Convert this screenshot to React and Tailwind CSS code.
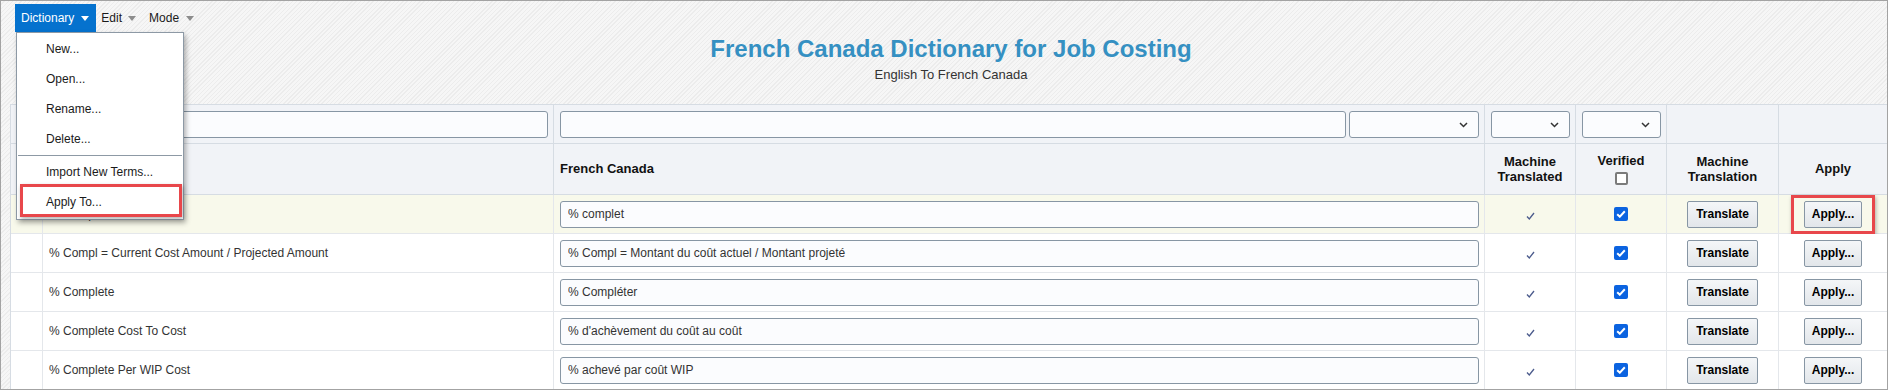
import { useState } from "react";

const terms = [
	{ en: "% Compl", fr: "% complet", active: true },
	{ en: "% Compl = Current Cost Amount / Projected Amount", fr: "% Compl = Montant du coût actuel / Montant projeté" },
	{ en: "% Complete", fr: "% Compléter" },
	{ en: "% Complete Cost To Cost", fr: "% d'achèvement du coût au coût" },
	{ en: "% Complete Per WIP Cost", fr: "% achevé par coût WIP" },
];

const menuItems = ["New...", "Open...", "Rename...", "Delete..."];

// little down arrow used by the menu bar
const Tri = ({ className }) => (
	<svg width="8" height="5" viewBox="0 0 8 5" className={className}>
		<polygon points="0,0 8,0 4,5" fill="currentColor" />
	</svg>
);

const Select = ({ className }) => (
	<div className={`relative h-[27px] rounded-[3px] border border-[#8796a4] bg-[#fbfcfe] ${className}`}>
		<svg width="9" height="6" viewBox="0 0 9 6" className="absolute right-[10px] top-[10px]">
			<path d="M1 1l3.5 3.5L8 1" fill="none" stroke="#333" strokeWidth="1.5" />
		</svg>
	</div>
);

const TextBox = ({ value, className }) => (
	<input
		readOnly
		value={value}
		className={`h-[27px] rounded-[3px] border border-[#8796a4] bg-[#fbfcfe] px-[7px] text-[12px] text-[#333] outline-none ${className}`}
	/>
);

const Checkbox = ({ checked }) =>
	checked ? (
		<div className="flex h-[14px] w-[14px] items-center justify-center rounded-[2px] bg-[#0b63e0]">
			<svg width="10" height="8" viewBox="0 0 10 8">
				<path d="M1.2 4.2l2.6 2.5L8.8 1.3" fill="none" stroke="#fff" strokeWidth="2" />
			</svg>
		</div>
	) : (
		<div className="h-[13px] w-[13px] rounded-[2px] border-2 border-[#7b7b7b] bg-white" />
	);

const Button = ({ children, className }) => (
	<div
		className={`flex h-[27px] items-center justify-center rounded-[2px] border border-[#8796a4] bg-[linear-gradient(#f4f6f8,#e2e6ea)] text-[12px] font-bold text-black ${className}`}
	>
		{children}
	</div>
);

const head = "border-r border-b border-[#d6dce3] bg-[#f1f3f7]";

const TermRow = ({ term }) => {
	const bg = term.active ? "bg-[#f8f9eb]" : "bg-white";
	const cell = `h-[39px] border-r border-b border-[#e4e7eb] flex items-center ${bg}`;
	return (
		<>
			<div className={`${cell} ${term.active ? "" : "bg-[#f1f3f7]"}`} />
			<div className={`${cell} pl-[6px] text-[12px] text-[#333]`}>{term.en}</div>
			<div className={`${cell} pl-[6px] pr-[5px]`}>
				<TextBox value={term.fr} className="w-full" />
			</div>
			<div className={`${cell} justify-center`}>
				<svg width="9" height="8" viewBox="0 0 9 8" className="mt-[3px]">
					<path d="M1 4.5l2.3 2.5L8 1" fill="none" stroke="#4b5b8c" strokeWidth="1.3" />
				</svg>
			</div>
			<div className={`${cell} justify-center`}>
				<Checkbox checked />
			</div>
			<div className={`${cell} justify-center`}>
				<Button className="w-[71px]">Translate</Button>
			</div>
			<div className={`${cell} relative justify-center`}>
				<Button className="w-[58px]">Apply...</Button>
				{term.active && (
					<div className="absolute left-[12px] right-[12px] top-0 bottom-[-1px] border-[3px] border-[#e8474b] shadow-[1px_2px_4px_rgba(0,0,0,0.3)]" />
				)}
			</div>
		</>
	);
};

export default function App() {
	const [rows] = useState(terms);

	return (
		<div className="relative h-[390px] w-[1888px] overflow-hidden border border-[#a3a3a3] bg-[repeating-linear-gradient(135deg,#f6f6f6_0px,#f6f6f6_2px,#ececec_2px,#ececec_3px)] font-['Liberation_Sans',Arial,sans-serif]">
			{/* menu bar */}
			<div className="ml-[14px] mt-[3px] flex h-[28px] items-center text-[12px]">
				<div className="flex h-full items-center gap-[7px] bg-[#0572ce] pl-[6px] pr-[7px] text-white">
					Dictionary <Tri className="text-white" />
				</div>
				<div className="flex h-full items-center gap-[6px] pl-[5px] pr-[8px] text-[#1a1a1a]">
					Edit <Tri className="text-[#8c8c8c]" />
				</div>
				<div className="flex h-full items-center gap-[7px] pl-[5px] pr-[8px] text-[#1a1a1a]">
					Mode <Tri className="text-[#8c8c8c]" />
				</div>
			</div>

			<div className="mt-[3px] pl-[14px] text-center">
				<h1 className="text-[24px] font-bold leading-[28px] text-[#3590c2]">French Canada Dictionary for Job Costing</h1>
				<p className="mt-[4px] text-[13px] leading-[16px] text-[#333]">English To French Canada</p>
			</div>

			{/* dictionary grid */}
			<div className="ml-[9px] mt-[21px] grid grid-cols-[32px_511px_931px_91px_91px_112px_109px] border-l border-t border-[#d6dce3]">
				{/* filter row */}
				<div className={`${head} h-[39px]`} />
				<div className={`${head} flex h-[39px] items-center pl-[6px] pr-[5px]`}>
					<TextBox value="" className="w-full" />
				</div>
				<div className={`${head} flex h-[39px] items-center gap-[3px] pl-[6px] pr-[5px]`}>
					<TextBox value="" className="flex-1" />
					<Select className="w-[130px]" />
				</div>
				<div className={`${head} flex h-[39px] items-center pl-[6px] pr-[5px]`}>
					<Select className="w-full" />
				</div>
				<div className={`${head} flex h-[39px] items-center pl-[6px] pr-[5px]`}>
					<Select className="w-full" />
				</div>
				<div className={`${head} h-[39px]`} />
				<div className={`${head} h-[39px]`} />

				{/* column headings */}
				<div className={`${head} h-[51px]`} />
				<div className={`${head} h-[51px]`} />
				<div className={`${head} flex h-[51px] items-center pl-[6px] text-[13px] font-bold text-[#111]`}>French Canada</div>
				<div className={`${head} flex h-[51px] items-center justify-center text-center text-[13px] font-bold leading-[15px] text-[#111]`}>
					Machine
					<br />
					Translated
				</div>
				<div className={`${head} flex h-[51px] flex-col items-center justify-center gap-[4px] text-[13px] font-bold leading-[15px] text-[#111]`}>
					Verified
					<Checkbox />
				</div>
				<div className={`${head} flex h-[51px] items-center justify-center text-center text-[13px] font-bold leading-[15px] text-[#111]`}>
					Machine
					<br />
					Translation
				</div>
				<div className={`${head} flex h-[51px] items-center justify-center text-[13px] font-bold text-[#111]`}>Apply</div>

				{rows.map((t) => (
					<TermRow key={t.fr} term={t} />
				))}
			</div>

			{/* open Dictionary menu */}
			<div className="absolute left-[15px] top-[31px] w-[168px] border border-[#8d99a5] bg-white pb-[2px] pt-[1px] text-[12px] text-[#1a1a1a] shadow-[2px_3px_5px_rgba(0,0,0,0.3)]">
				{menuItems.map((m) => (
					<div key={m} className="flex h-[30px] items-center pl-[29px]">
						{m}
					</div>
				))}
				<div className="mx-px my-px h-px bg-[#8d99a5]" />
				<div className="flex h-[30px] items-center pl-[29px]">Import New Terms...</div>
				<div className="relative flex h-[30px] items-center pl-[29px]">
					Apply To...
					<div className="absolute -top-[3px] bottom-0 left-[3px] right-px border-[3px] border-[#e8474b] shadow-[1px_2px_4px_rgba(0,0,0,0.3)]" />
				</div>
			</div>
		</div>
	);
}
